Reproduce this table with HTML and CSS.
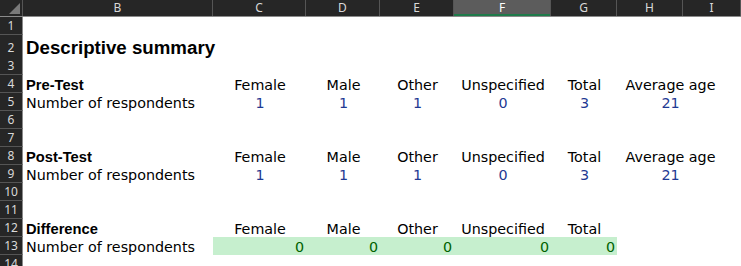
FILE: index.html
```html
<!DOCTYPE html>
<html lang="en">
<head>
  <meta charset="UTF-8">
  <title>Descriptive summary</title>
  <link rel="stylesheet" href="styles.css">
</head>
<body>
  <div class="sheet">
    <div class="row head">
      <div class="corner"></div>
      <div class="colhead">B</div>
      <div class="colhead">C</div>
      <div class="colhead">D</div>
      <div class="colhead">E</div>
      <div class="colhead selected">F</div>
      <div class="colhead">G</div>
      <div class="colhead">H</div>
      <div class="colhead">I</div>
    </div>

    <div class="row"><div class="rh">1</div></div>
    <div class="row tall">
      <div class="rh">2</div>
      <div class="cell col-b title">Descriptive summary</div>
    </div>
    <div class="row"><div class="rh">3</div></div>

    <div class="row">
      <div class="rh">4</div>
      <div class="cell col-b bold">Pre-Test</div>
      <div class="cell col-c mid">Female</div>
      <div class="cell col-d mid">Male</div>
      <div class="cell col-e mid">Other</div>
      <div class="cell col-f mid">Unspecified</div>
      <div class="cell col-g mid">Total</div>
      <div class="cell col-h mid">Average age</div>
    </div>
    <div class="row">
      <div class="rh">5</div>
      <div class="cell col-b">Number of respondents</div>
      <div class="cell col-c mid num">1</div>
      <div class="cell col-d mid num">1</div>
      <div class="cell col-e mid num">1</div>
      <div class="cell col-f mid num">0</div>
      <div class="cell col-g mid num">3</div>
      <div class="cell col-h mid num">21</div>
    </div>
    <div class="row"><div class="rh">6</div></div>
    <div class="row"><div class="rh">7</div></div>

    <div class="row">
      <div class="rh">8</div>
      <div class="cell col-b bold">Post-Test</div>
      <div class="cell col-c mid">Female</div>
      <div class="cell col-d mid">Male</div>
      <div class="cell col-e mid">Other</div>
      <div class="cell col-f mid">Unspecified</div>
      <div class="cell col-g mid">Total</div>
      <div class="cell col-h mid">Average age</div>
    </div>
    <div class="row">
      <div class="rh">9</div>
      <div class="cell col-b">Number of respondents</div>
      <div class="cell col-c mid num">1</div>
      <div class="cell col-d mid num">1</div>
      <div class="cell col-e mid num">1</div>
      <div class="cell col-f mid num">0</div>
      <div class="cell col-g mid num">3</div>
      <div class="cell col-h mid num">21</div>
    </div>
    <div class="row"><div class="rh">10</div></div>
    <div class="row"><div class="rh">11</div></div>

    <div class="row">
      <div class="rh">12</div>
      <div class="cell col-b bold">Difference</div>
      <div class="cell col-c mid">Female</div>
      <div class="cell col-d mid">Male</div>
      <div class="cell col-e mid">Other</div>
      <div class="cell col-f mid">Unspecified</div>
      <div class="cell col-g mid">Total</div>
    </div>
    <div class="row">
      <div class="rh">13</div>
      <div class="cell col-b">Number of respondents</div>
      <div class="cell col-c good">0</div>
      <div class="cell col-d good">0</div>
      <div class="cell col-e good">0</div>
      <div class="cell col-f good">0</div>
      <div class="cell col-g good">0</div>
    </div>
    <div class="row"><div class="rh">14</div></div>
  </div>
</body>
</html>
```

FILE: styles.css
```css
body {
  margin: 0;
  background: #fff;
  font-family: "DejaVu Sans", sans-serif;
  font-size: 14.3px;
  color: #000;
  overflow: hidden;
}
.sheet {
  width: 741px;
}
.row {
  display: grid;
  grid-template-columns: 23px 190px 93px 74px 74px 97px 66px 66px 58px;
  height: 18px;
}
.row.tall {
  height: 22px;
}

/* column letters */
.row.head {
  height: 17px;
  background: #262626;
  border-bottom: 1px solid #8a8a8a;
  box-sizing: border-box;
}
.corner {
  position: relative;
  border-right: 1px solid #555;
}
.corner::after {
  content: "";
  position: absolute;
  right: 2px;
  bottom: 2px;
  border-left: 11px solid transparent;
  border-bottom: 11px solid #7a7a7a;
}
.colhead {
  border-right: 1px solid #555;
  color: #d9d9d9;
  font-family: "Noto Sans", sans-serif;
  font-size: 12px;
  line-height: 16px;
  text-align: center;
}
.colhead.selected {
  background: #5c5c5c;
  color: #fff;
  box-shadow: inset 0 -2px 0 #1f7a4a;
}

/* row numbers */
.rh {
  grid-column: 1;
  background: #262626;
  color: #d9d9d9;
  border-right: 1px solid #8a8a8a;
  border-bottom: 1px solid #555;
  box-sizing: border-box;
  font-family: "Noto Sans", sans-serif;
  font-size: 12px;
  line-height: 17px;
  text-align: center;
}
.tall .rh {
  line-height: 21px;
  padding-top: 2px;
}

/* cells */
.cell {
  display: flex;
  align-items: flex-end;
  padding: 0 2px 0 3px;
  white-space: nowrap;
  line-height: normal;
}
.col-b { grid-column: 2; }
.col-c { grid-column: 3; }
.col-d { grid-column: 4; }
.col-e { grid-column: 5; }
.col-f { grid-column: 6; }
.col-g { grid-column: 7; }
.col-h { grid-column: 8 / 10; padding-right: 20px; }

.mid {
  justify-content: center;
}
.num {
  color: #1f3a93;
}
.title {
  font-family: "Liberation Sans", sans-serif;
  font-weight: bold;
  font-size: 18.7px;
}
.bold {
  font-family: "Liberation Sans", sans-serif;
  font-weight: bold;
  font-size: 14.7px;
}
.good {
  justify-content: flex-end;
  background: #c6efce;
  color: #006100;
}
```
